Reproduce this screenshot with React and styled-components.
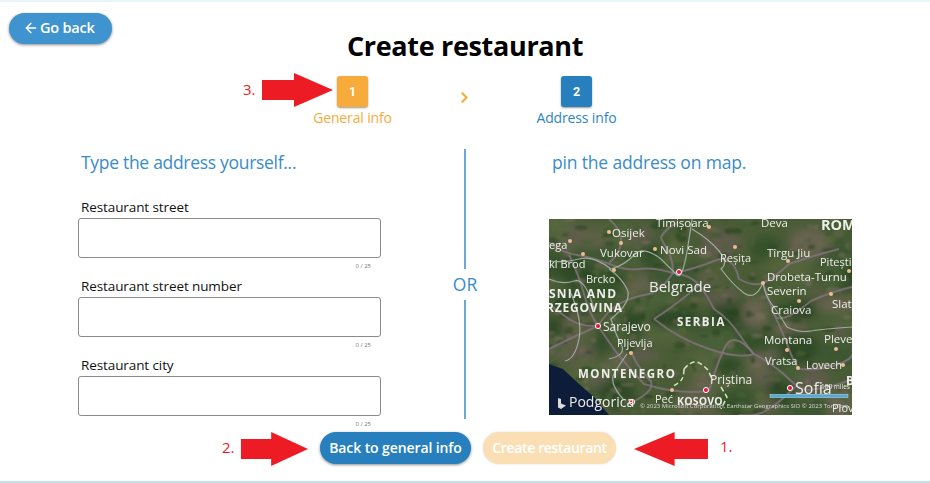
import styled, { createGlobalStyle } from 'styled-components'
import { ArrowLeft, ChevronRight } from 'lucide-react'

const GlobalStyle = createGlobalStyle`
  html, body {
    margin: 0;
    padding: 0;
    background: #fff;
    font-family: "Open Sans", "Noto Sans", "Liberation Sans", sans-serif;
  }
  * {
    box-sizing: border-box;
  }
`

const Page = styled.div`
  position: relative;
  width: 930px;
  height: 483px;
  overflow: hidden;
  border-top: 2px solid #e9f5fb;
  border-bottom: 2px solid #c4e0e8;
  padding: 11px 9px 0;
`

const Header = styled.header`
  display: grid;
  grid-template-columns: 1fr auto 1fr;
  height: 63px;
`

const GoBack = styled.button`
  justify-self: start;
  display: flex;
  align-items: center;
  gap: 1px;
  width: 103px;
  height: 31px;
  padding: 0 0 2px 14px;
  border: none;
  border-radius: 16px;
  background: #3f94cf;
  color: #fff;
  font: 600 14.5px "Open Sans", sans-serif;
  letter-spacing: -0.2px;
  box-shadow: 0 1px 3px rgba(0, 0, 0, 0.45);
`

const Title = styled.h1`
  margin: 16px 0 0;
  font-size: 27px;
  line-height: 34px;
  font-weight: 700;
  letter-spacing: -0.33px;
  color: #000;
`

const Steps = styled.div`
  display: flex;
  justify-content: center;
  height: 73px;
  padding-right: 1px;
`

const Step = styled.div`
  display: flex;
  flex-direction: column;
  align-items: center;
  width: 100px;
  color: ${p => p.$color};
  font-size: 14px;
  letter-spacing: -0.15px;
`

const StepBox = styled.div`
  display: flex;
  align-items: center;
  justify-content: center;
  width: 31px;
  height: 31px;
  margin-bottom: 1px;
  border-radius: 3px;
  background: ${p => p.$color};
  color: #fff;
  font: 700 12.5px Roboto, sans-serif;
  box-shadow: 0 1px 2px rgba(0, 0, 0, 0.4);
`

const StepArrow = styled.div`
  display: flex;
  justify-content: center;
  width: 124px;
  padding-top: 13px;
  color: #f7ab3b;
`

const Columns = styled.main`
  display: grid;
  grid-template-columns: 447px 18px 1fr;
  height: 270px;
`

const LeftColumn = styled.section`
  padding-left: 69px;
`

const RightColumn = styled.section`
  padding-left: 78px;
`

const Heading = styled.h2`
  margin: 0;
  height: 49px;
  padding-left: ${p => p.$indent}px;
  font-size: 17.5px;
  line-height: 26px;
  font-weight: 400;
  letter-spacing: ${p => p.$spacing}px;
  color: #3a8cc8;
`

const Field = styled.div`
  display: flex;
  flex-direction: column;
  width: 303px;
  height: 79px;
`

const Label = styled.label`
  height: 20px;
  padding-left: 3px;
  font-size: 13.5px;
  line-height: 19px;
  letter-spacing: -0.1px;
  color: #111;
`

const Input = styled.input`
  width: 303px;
  height: 40px;
  border: 1px solid #8a8a8a;
  border-radius: 3px;
  background: #fff;
`

const Counter = styled.div`
  padding: 3px 10px 0 0;
  text-align: right;
  font-size: 6px;
  line-height: 10px;
  color: #777;
`

const Divider = styled.div`
  display: flex;
  flex-direction: column;
  align-items: center;
  height: 270px;
`

const DividerLine = styled.div`
  flex: 1;
  width: 2px;
  background: #6aa8d8;
`

const OrText = styled.div`
  padding: 5px 0;
  font-size: 17.5px;
  line-height: 21px;
  color: #3a8cc8;
`

const MapFrame = styled.div`
  width: 303px;
  height: 196px;
  margin: 21px 0 0 -3px;
  overflow: hidden;
`

const Actions = styled.footer`
  display: flex;
  justify-content: center;
  gap: 12px;
  padding: 13px 0 0 6px;
`

const ActionButton = styled.button`
  height: 32px;
  width: ${p => p.$width}px;
  padding: 0 0 2px;
  border: none;
  border-radius: 16px;
  background: ${p => p.$bg};
  color: #fff;
  font: 600 14px "Open Sans", sans-serif;
  letter-spacing: ${p => p.$spacing}px;
  box-shadow: ${p => (p.disabled ? '0 0 2px rgba(0, 0, 0, 0.15)' : '0 1px 3px rgba(0, 0, 0, 0.45)')};
`

const Note = styled.span`
  position: absolute;
  left: ${p => p.$x}px;
  top: ${p => p.$y}px;
  font-size: 15px;
  line-height: 18px;
  color: #ed1c24;
`

const ArrowSvg = styled.svg`
  position: absolute;
  left: ${p => p.$x}px;
  top: ${p => p.$y}px;
`

/* seta vermelha das anotações */
function RedArrow({ x, y, width, flip }) {
  return (
    <ArrowSvg $x={x} $y={y} width={width} height="34" viewBox="0 0 72 34" preserveAspectRatio="none">
      <polygon
        points="1,7 33,7 33,0 72,17 33,34 33,27 1,27"
        fill="#ed1c24"
        transform={flip ? 'matrix(-1 0 0 1 72 0)' : undefined}
      />
    </ArrowSvg>
  )
}

/* manchas do terreno, geradas com semente fixa */
function makeBlotches(count, minR, spread, colors, start) {
  const out = []
  let seed = start
  const rnd = () => {
    seed = (seed * 16807) % 2147483647
    return seed / 2147483647
  }
  for (let i = 0; i < count; i++) {
    out.push({
      cx: rnd() * 303,
      cy: rnd() * 196,
      rx: minR + rnd() * spread,
      ry: minR * 0.7 + rnd() * spread * 0.6,
      fill: colors[Math.floor(rnd() * colors.length)]
    })
  }
  return out
}

const broad = makeBlotches(120, 8, 18, ['#3d5730', '#4a6138', '#2f4a28', '#5e6046', '#686450', '#36512b', '#55653c', '#5f5c4c'], 17)
const fine = makeBlotches(420, 1.5, 5, ['#2b4424', '#3c5a2e', '#6a6650', '#54683a', '#27401f', '#77705c', '#46603a'], 91)

const roads = [
  'M0 24 Q14 34 28 36 T58 44 Q76 52 90 50 T124 54 Q142 56 150 66 T165 90 Q180 100 190 115 T205 135 Q226 146 240 160 T265 170',
  'M124 54 Q124 40 118 30 T112 18 Q118 8 128 4',
  'M124 54 Q146 50 165 42 T190 60 Q204 68 214 64 T240 45 Q266 36 290 30',
  'M49 107 Q58 92 70 85 T100 75 Q114 70 124 54',
  'M49 107 Q58 120 65 130 T95 165 Q130 176 160 172',
  'M49 107 Q32 108 20 100 T0 85',
  'M214 64 Q220 82 225 95 T262 82 Q284 72 303 68',
  'M225 95 Q234 114 240 130 T250 150 Q272 152 290 145 T303 130',
  'M160 172 Q166 150 175 130 T205 135',
  'M83 135 Q90 150 100 160 T82 184',
  'M20 36 Q30 56 35 75 T49 107',
  'M246 168 Q232 182 220 190 T190 196',
  'M60 0 Q74 12 72 24 T60 44',
  'M265 170 Q286 168 303 160',
  'M0 130 Q20 120 49 107',
  'M105 100 Q130 120 160 130 T205 135',
  'M150 66 Q130 84 105 100'
]

const rivers = [
  'M0 42 Q16 44 30 40 T62 50 Q76 46 85 36 T112 40 Q122 50 128 56 T140 20 Q142 8 143 0',
  'M143 10 Q160 20 170 32 T172 50 Q184 66 195 74 T214 64 Q216 76 222 84 T238 108 Q250 114 262 112 T303 108',
  'M60 50 Q72 58 78 70 T62 100 Q66 114 72 125 T60 140',
  'M0 60 Q14 66 25 62 T45 90',
  'M78 135 Q70 146 65 155 T74 180',
  'M20 70 Q34 100 30 120 T16 142'
]

const border = 'M135 150 Q140 144 145 143 T158 150 Q162 156 163 162 M135 150 Q135 156 133 160 T122 168 M172 168 L178 178 L172 190'

const cities = [
  [60, 13, 1], [72, 24, 1], [34, 35, 1], [21, 22, 1], [106, 30, 1], [160, 8, 1], [186, 28, 1],
  [65, 51, 1], [130, 53, 2], [214, 64, 1], [250, 82, 1], [49, 107, 2], [287, 130, 1], [238, 131, 1],
  [82, 134, 1], [249, 149, 1], [294, 146, 1], [157, 171, 2], [241, 169, 2], [83, 183, 2], [123, 171, 1],
  [300, 52, 1], [239, 42, 1], [282, 75, 1]
]

const labels = [
  ['Timișoara', 107, 8, 11.5], ['Deva', 212, 8, 11.5], ['Osijek', 63, 18, 11.5], ['ega', 0, 30, 11],
  ['Vukovar', 51, 38, 11.5], ['Novi Sad', 111, 35, 11.5], ['Reșița', 171, 43, 11], ['Tîrgu Jiu', 218, 38, 11.5],
  ['Pitești', 271, 47, 11], ['ki Brod', 0, 49, 11], ['Brcko', 37, 64, 11], ['Belgrade', 100, 73, 15],
  ['Drobeta-Turnu', 218, 62, 11.5], ['Severin', 218, 76, 11.5], ['Slat', 283, 89, 11.5], ['Craiova', 222, 95, 11.5],
  ['Sarajevo', 54, 112, 12], ['Pljevlja', 68, 128, 11], ['Montana', 215, 125, 11.5], ['Pleve', 275, 124, 11.5],
  ['Vratsa', 216, 146, 11], ['Lovech', 257, 150, 11], ['Priștina', 161, 165, 12], ['Sofia', 246, 175, 16],
  ['Peć', 106, 184, 11], ['Podgorica', 20, 188, 14], ['Plov', 283, 193, 11]
]

const boldLabels = [
  ['ROM', 272, 11, 14.5, 0], ['SNIA AND', 0, 79, 12, 1.2], ['RZEGOVINA', -3, 93, 12, 0.8], ['SERBIA', 128, 107, 11.5, 1.5],
  ['MONTENEGRO', 29, 159, 11.5, 1.5], ['KOSOVO', 128, 186, 10.5, 0.2], ['B', 297, 166, 12, 0]
]

/* mapa de satélite desenhado em svg */
function SatelliteMap() {
  return (
    <svg width="303" height="196" viewBox="0 0 303 196" fontFamily="'Open Sans', sans-serif">
      <defs>
        <filter id="terrain"><feGaussianBlur stdDeviation="5" /></filter>
        <filter id="grain"><feGaussianBlur stdDeviation="1" /></filter>
        <filter id="soft"><feGaussianBlur stdDeviation="0.5" /></filter>
        <filter id="text"><feGaussianBlur stdDeviation="0.3" /></filter>
      </defs>
      <rect width="303" height="196" fill="#4a5c36" />
      <g filter="url(#terrain)">
        {broad.map((b, i) => (
          <ellipse key={i} cx={b.cx} cy={b.cy} rx={b.rx} ry={b.ry} fill={b.fill} />
        ))}
      </g>
      <g filter="url(#grain)" opacity="0.55">
        {fine.map((b, i) => (
          <ellipse key={i} cx={b.cx} cy={b.cy} rx={b.rx} ry={b.ry} fill={b.fill} />
        ))}
      </g>
      <polygon points="0,145 14,150 30,165 45,178 60,196 0,196" fill="#0c1c38" filter="url(#soft)" />
      <g fill="none" filter="url(#soft)">
        {roads.map((d, i) => (
          <path key={i} d={d} stroke="#85737f" strokeWidth="2" opacity="0.8" />
        ))}
        {rivers.map((d, i) => (
          <path key={i} d={d} stroke="#aab8ae" strokeWidth="1.2" opacity="0.85" />
        ))}
      </g>
      <path d={border} fill="none" stroke="#d4e6c4" strokeWidth="1.5" strokeDasharray="5 3" />
      {cities.map(([x, y, big], i) => (
        <circle key={i} cx={x} cy={y} r={big > 1 ? 2.6 : 2} fill={big > 1 ? '#e02040' : '#eebd94'} stroke={big > 1 ? '#fff' : 'none'} />
      ))}
      <g fill="#eeeeea" filter="url(#text)">
        {labels.map(([t, x, y, s]) => (
          <text key={t} x={x} y={y} fontSize={s}>{t}</text>
        ))}
        {boldLabels.map(([t, x, y, s, sp]) => (
          <text key={t} x={x} y={y} fontSize={s} fontWeight="700" letterSpacing={sp}>{t}</text>
        ))}
        <text x="91" y="189" fontSize="6" fill="#d8d8d8">© 2023 Microsoft Corporation, Earthstar Geographics SIO   © 2023 TomTom</text>
        <text x="272" y="170" fontSize="6.5">100 miles</text>
      </g>
      <path d="M9 179 L12 180 L12 184.5 L17 186.5 L12 190 L9 188.5 Z" fill="#dcdcdc" />
      <rect x="221" y="175.5" width="78" height="3" fill="#45aee8" stroke="#dcdcdc" strokeWidth="0.5" />
    </svg>
  )
}

const fields = ['Restaurant street', 'Restaurant street number', 'Restaurant city']

export default function App() {
  return (
    <Page>
      <GlobalStyle />
      <Header>
        <GoBack>
          <ArrowLeft size={16} strokeWidth={2} />
          Go back
        </GoBack>
        <Title>Create restaurant</Title>
      </Header>

      <Steps>
        <Step $color="#f7ab3b">
          <StepBox $color="#f7ab3b">1</StepBox>
          General info
        </Step>
        <StepArrow>
          <ChevronRight size={17} strokeWidth={3} />
        </StepArrow>
        <Step $color="#2f85c2">
          <StepBox $color="#2780bd">2</StepBox>
          Address info
        </Step>
      </Steps>

      <Columns>
        <LeftColumn>
          <Heading $indent={3} $spacing={-0.3}>Type the address yourself...</Heading>
          {fields.map(label => (
            <Field key={label}>
              <Label>{label}</Label>
              <Input type="text" />
              <Counter>0 / 25</Counter>
            </Field>
          ))}
        </LeftColumn>
        <Divider>
          <DividerLine />
          <OrText>OR</OrText>
          <DividerLine />
        </Divider>
        <RightColumn>
          <Heading $indent={0} $spacing={-0.17}>pin the address on map.</Heading>
          <MapFrame>
            <SatelliteMap />
          </MapFrame>
        </RightColumn>
      </Columns>

      <Actions>
        <ActionButton $bg="#2780bd" $width={151} $spacing={-0.1}>Back to general info</ActionButton>
        <ActionButton $bg="#fadfb4" $width={133} $spacing={-0.35} disabled>Create restaurant</ActionButton>
      </Actions>

      <Note $x={243} $y={78}>3.</Note>
      <RedArrow x={261} y={71} width={72} />
      <Note $x={222} $y={436}>2.</Note>
      <RedArrow x={240} y={430} width={68} />
      <RedArrow x={634} y={430} width={75} flip />
      <Note $x={720} $y={435}>1.</Note>
    </Page>
  )
}
